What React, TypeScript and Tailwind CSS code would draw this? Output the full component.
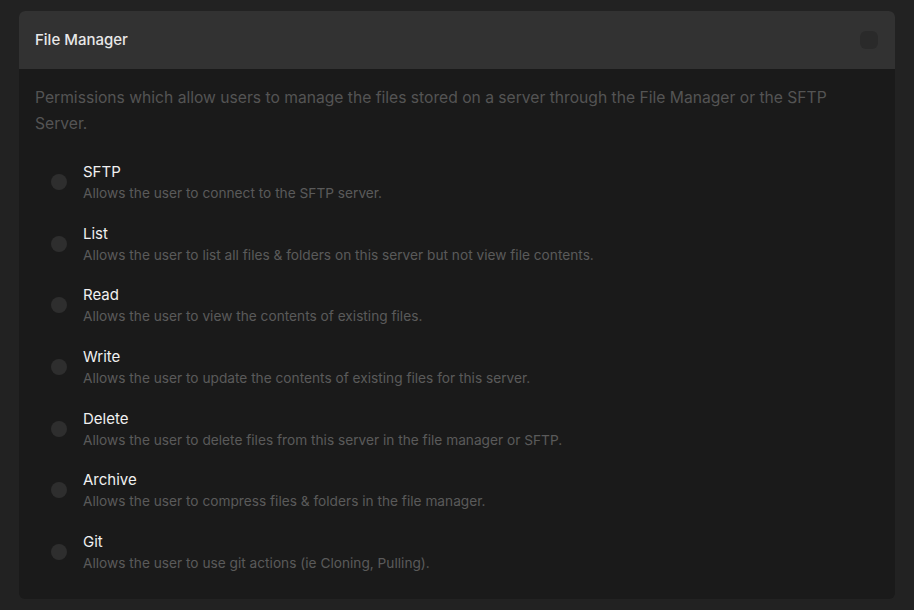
const permissions = [
  { name: "SFTP", desc: "Allows the user to connect to the SFTP server." },
  { name: "List", desc: "Allows the user to list all files & folders on this server but not view file contents." },
  { name: "Read", desc: "Allows the user to view the contents of existing files." },
  { name: "Write", desc: "Allows the user to update the contents of existing files for this server." },
  { name: "Delete", desc: "Allows the user to delete files from this server in the file manager or SFTP." },
  { name: "Archive", desc: "Allows the user to compress files & folders in the file manager." },
  { name: "Git", desc: "Allows the user to use git actions (ie Cloning, Pulling)." },
];

export default function App() {
  return (
    <div
      className="min-h-screen w-full bg-[#222222] px-[19px] pt-[11px] pb-[11px]"
      style={{ fontFamily: "Inter, 'Noto Sans', sans-serif" }}
    >
      <div className="rounded-[6px] overflow-hidden bg-[#1a1a1a]">
        <div className="h-[58px] bg-[#323232] flex items-center justify-between pl-4 pr-[17px]">
          <h2 className="text-[15px] font-medium text-[#e8e8e8]">File Manager</h2>
          <div className="w-[18px] h-[18px] rounded-[6px] bg-[#2a2a2a]" />
        </div>
        <div className="p-4">
          <p className="text-[15.65px] leading-[26px] text-[#545454] pr-3">
            Permissions which allow users to manage the files stored on a server through the File Manager or the SFTP
            Server.
          </p>
          <div className="mt-[14px]">
            {permissions.map((p) => (
              <div key={p.name} className="flex items-center gap-4 pl-4 py-[10px] h-[61.7px]">
                <span className="w-4 h-4 rounded-full bg-[#2e2e2e] shrink-0" />
                <div>
                  <div className="text-[15px] leading-[22px] text-[#f0f0f0]">{p.name}</div>
                  <div className="text-[13.7px] leading-[20px] text-[#5a5a5a]">{p.desc}</div>
                </div>
              </div>
            ))}
          </div>
        </div>
      </div>
    </div>
  );
}
